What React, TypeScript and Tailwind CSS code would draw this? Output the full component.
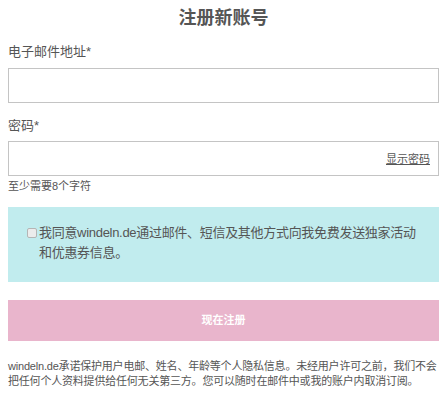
export default function App() {
  const font = {
    fontFamily: '"Liberation Sans", "Noto Sans CJK SC", sans-serif',
  };

  return (
    <div className="w-[447px] h-[395px] bg-white px-2 pt-[7px] text-[#555]" style={font}>
      <h3 className="text-center text-[18px] leading-[22px] font-bold text-[#555]">
        注册新账号
      </h3>

      <div className="mt-[14px] text-[13px] leading-[18px] text-[#555]">电子邮件地址*</div>
      <div className="mt-[7px] h-[35px] w-full border border-[#c4c4c4] bg-white" />

      <div className="mt-[14px] text-[13px] leading-[18px] text-[#555]">密码*</div>
      <div className="mt-[6px] h-[35px] w-full border border-[#c4c4c4] bg-white flex items-center justify-end pr-[8px]">
        <span className="text-[11px] leading-[14px] underline text-[#555]">显示密码</span>
      </div>
      <div className="mt-[3px] text-[11px] leading-[14px] text-[#555]">至少需要8个字符</div>

      <div className="mt-[14px] h-[75px] bg-[#c1ecee] pl-[19px] pt-[16px] flex items-start">
        <span className="mt-[5px] mr-[2px] h-[10px] w-[10px] shrink-0 rounded-[2px] border border-[#b5b5b5] bg-[#ececec]" />
        <div className="text-[13px] leading-[20px] tracking-[-0.3px] text-[#555]">
          我同意windeln.de通过邮件、短信及其他方式向我免费发送独家活动
          <br />
          和优惠券信息。
        </div>
      </div>

      <button className="mt-[18px] h-[41px] w-full bg-[#e9b5cc] text-[11px] font-bold text-white">
        现在注册
      </button>

      <p className="mt-[18px] text-[11px] leading-[15px] tracking-[-0.2px] text-[#555]">
        windeln.de承诺保护用户电邮、姓名、年龄等个人隐私信息。未经用户许可之前，我们不会
        <br />
        把任何个人资料提供给任何无关第三方。您可以随时在邮件中或我的账户内取消订阅。
      </p>
    </div>
  );
}
